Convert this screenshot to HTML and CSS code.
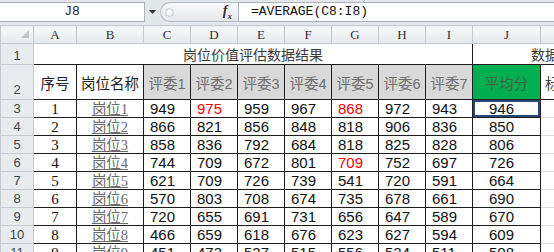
FILE: index.html
```html
<!DOCTYPE html>
<html lang="zh-CN">
<head>
    <meta charset="UTF-8">
    <title>岗位价值评估数据结果</title>
    <link rel="stylesheet" href="styles.css">
</head>
<body>

    <div class="formula-bar">
        <div class="name-box">J8</div>
        <div class="name-drop">
            <svg width="7" height="4" viewBox="0 0 7 4"><path d="M0 0H7L3.5 4Z" fill="#333"/></svg>
        </div>
        <div class="fx-pill">
            <span class="knob"></span>
            <span class="fx"><i>f</i><sub>x</sub></span>
        </div>
        <div class="formula-input">=AVERAGE(C8:I8)</div>
    </div>

    <table class="sheet">
        <colgroup>
            <col class="w-rh"><col class="w-a"><col class="w-b">
            <col class="w-n"><col class="w-n"><col class="w-n"><col class="w-n">
            <col class="w-n"><col class="w-n"><col class="w-n">
            <col class="w-j"><col class="w-k">
        </colgroup>
        <tr class="col-head">
            <th class="corner"><span class="tri"></span></th>
            <th>A</th><th>B</th><th>C</th><th>D</th><th>E</th><th>F</th>
            <th>G</th><th>H</th><th>I</th><th>J</th><th>K</th>
        </tr>
        <tr class="r1">
            <td class="rh">1</td>
            <td class="title" colspan="9">岗位价值评估数据结果</td>
            <td class="title2" colspan="2">数据标准化结果</td>
        </tr>
        <tr class="r2">
            <td class="rh">2</td>
            <td class="hd">序号</td>
            <td class="hd">岗位名称</td>
            <td class="hd judge">评委1</td>
            <td class="hd judge">评委2</td>
            <td class="hd judge">评委3</td>
            <td class="hd judge">评委4</td>
            <td class="hd judge">评委5</td>
            <td class="hd judge">评委6</td>
            <td class="hd judge">评委7</td>
            <td class="hd avg">平均分</td>
            <td class="hd extra">标准分</td>
        </tr>
        <tr><td class="rh">3</td><td class="no">1</td><td class="job">岗位1</td><td class="v">949</td><td class="v red">975</td><td class="v">959</td><td class="v">967</td><td class="v red">868</td><td class="v">972</td><td class="v">943</td><td class="m sel">946</td><td class="k"></td></tr>
        <tr><td class="rh">4</td><td class="no">2</td><td class="job">岗位2</td><td class="v">866</td><td class="v">821</td><td class="v">856</td><td class="v">848</td><td class="v">818</td><td class="v">906</td><td class="v">836</td><td class="m">850</td><td class="k"></td></tr>
        <tr><td class="rh">5</td><td class="no">3</td><td class="job">岗位3</td><td class="v">858</td><td class="v">836</td><td class="v">792</td><td class="v">684</td><td class="v">818</td><td class="v">825</td><td class="v">828</td><td class="m">806</td><td class="k"></td></tr>
        <tr><td class="rh">6</td><td class="no">4</td><td class="job">岗位4</td><td class="v">744</td><td class="v">709</td><td class="v">672</td><td class="v">801</td><td class="v red">709</td><td class="v">752</td><td class="v">697</td><td class="m">726</td><td class="k"></td></tr>
        <tr><td class="rh">7</td><td class="no">5</td><td class="job">岗位5</td><td class="v">621</td><td class="v">709</td><td class="v">726</td><td class="v">739</td><td class="v">541</td><td class="v">720</td><td class="v">591</td><td class="m">664</td><td class="k"></td></tr>
        <tr><td class="rh">8</td><td class="no">6</td><td class="job">岗位6</td><td class="v">570</td><td class="v">803</td><td class="v">708</td><td class="v">674</td><td class="v">735</td><td class="v">678</td><td class="v">661</td><td class="m">690</td><td class="k"></td></tr>
        <tr><td class="rh">9</td><td class="no">7</td><td class="job">岗位7</td><td class="v">720</td><td class="v">655</td><td class="v">691</td><td class="v">731</td><td class="v">656</td><td class="v">647</td><td class="v">589</td><td class="m">670</td><td class="k"></td></tr>
        <tr><td class="rh">10</td><td class="no">8</td><td class="job">岗位8</td><td class="v">466</td><td class="v">659</td><td class="v">618</td><td class="v">676</td><td class="v">623</td><td class="v">627</td><td class="v">594</td><td class="m">609</td><td class="k"></td></tr>
        <tr><td class="rh">11</td><td class="no">9</td><td class="job">岗位9</td><td class="v">451</td><td class="v">473</td><td class="v">527</td><td class="v">515</td><td class="v">556</td><td class="v">524</td><td class="v">511</td><td class="m">508</td><td class="k"></td></tr>
    </table>

</body>
</html>
```

FILE: styles.css
```css
* {
    box-sizing: border-box;
}

body {
    margin: 0;
    width: 554px;
    height: 252px;
    overflow: hidden;
    background: #fff;
    font-family: "Liberation Sans", "Noto Sans CJK SC", sans-serif;
    color: #111;
}

/* formula bar */
.formula-bar {
    display: flex;
    height: 26px;
    padding-top: 2px;
    background: #e3e7ec;
    border-bottom: 1px solid #c9ced5;
}

.name-box {
    width: 145px;
    height: 20px;
    background: #fff;
    border: 1px solid #aab3be;
    border-left: none;
    text-align: center;
    font: 13px/18px "Liberation Mono", monospace;
    color: #222;
}

.name-drop {
    width: 14px;
    height: 20px;
    display: flex;
    align-items: center;
    justify-content: center;
}

.fx-pill {
    width: 78px;
    height: 20px;
    margin-left: 1px;
    display: flex;
    align-items: center;
    justify-content: space-between;
    padding: 0 6px 0 4px;
    border: 1px solid #b3bbc5;
    border-right: none;
    border-radius: 10px 0 0 10px;
    background: linear-gradient(#f7f8fa, #e6e9ed);
}

.knob {
    width: 9px;
    height: 9px;
    border-radius: 50%;
    background: radial-gradient(circle at 40% 40%, #fff, #d7dce2);
    border: 1px solid #c9ced5;
}

.fx {
    font-family: "Liberation Serif", serif;
    font-size: 14px;
    font-weight: bold;
    color: #333;
}

.fx sub {
    font-size: 9px;
    font-style: italic;
}

.formula-input {
    flex: 1;
    height: 20px;
    padding-left: 12px;
    background: #fff;
    border: 1px solid #aab3be;
    border-right: none;
    font: 13px/18px "Liberation Mono", monospace;
    color: #111;
}

/* sheet */
.sheet {
    border-collapse: collapse;
    table-layout: fixed;
    width: 601px;
    margin-top: -1px;
}

.w-rh { width: 33px; }
.w-a { width: 43px; }
.w-b { width: 67px; }
.w-n { width: 47px; }
.w-j { width: 68px; }
.w-k { width: 60px; }

.sheet td,
.sheet th {
    padding: 0;
    height: 18px;
    overflow: hidden;
    white-space: nowrap;
}

.sheet .col-head th {
    height: 17px;
    font: normal 13px/15px "Liberation Serif", serif;
    color: #333;
    background: linear-gradient(#f7f8fa, #e6e9ec);
    border: 1px solid #c6cad0;
}

.sheet .col-head th.corner {
    text-align: right;
    vertical-align: bottom;
    padding: 0 4px 2px 0;
}

.tri {
    display: inline-block;
    width: 0;
    height: 0;
    border-left: 8px solid transparent;
    border-bottom: 8px solid #bfc3c9;
}

.sheet .rh {
    background: #e9ecef;
    border: 1px solid #c6cad0;
    text-align: center;
    vertical-align: bottom;
    font-size: 13px;
    line-height: 16px;
    color: #444;
}

.sheet .r1 td {
    height: 19px;
}

.sheet .r1 .title {
    text-align: center;
    font-size: 14px;
    color: #3a3a3a;
    border-bottom: 1px solid #1c1c1c;
}

.sheet .r1 .title2 {
    padding-left: 58px;
    font-size: 14px;
    color: #3a3a3a;
    border-left: 1px solid #1c1c1c;
    border-bottom: 1px solid #1c1c1c;
}

.sheet .r2 td {
    height: 35px;
}

.sheet .r2 .rh {
    padding-bottom: 1px;
}

.sheet .hd {
    text-align: center;
    vertical-align: middle;
    font-size: 14.5px;
    color: #222;
    border: 1px solid #1c1c1c;
}

.sheet .hd.judge {
    background: #d9d9d9;
    color: #6e6e6e;
}

.sheet .hd.avg {
    background: #00b050;
    color: #3a6446;
}

.sheet .hd.extra {
    text-align: left;
    padding-left: 4px;
    color: #444;
    border-right: none;
}

.sheet .no,
.sheet .job,
.sheet .v,
.sheet .m {
    border: 1px solid #1c1c1c;
    font-size: 15px;
    line-height: 16px;
}

.sheet .no {
    text-align: center;
    font-family: "Liberation Serif", serif;
}

.sheet .job {
    text-align: center;
    font-family: "Liberation Serif", "Noto Sans CJK SC", serif;
    font-size: 14.5px;
    color: #6a6a6a;
    text-decoration: underline;
}

.sheet .v {
    padding-left: 6px;
}

.sheet .m {
    padding-left: 16px;
}

.sheet .red {
    color: #ff0000;
}

.sheet .sel {
    box-shadow: inset 0 0 0 2px #27497a;
}

.sheet .k {
    border: 1px solid #dadcdf;
    border-left: 1px solid #1c1c1c;
}
```
